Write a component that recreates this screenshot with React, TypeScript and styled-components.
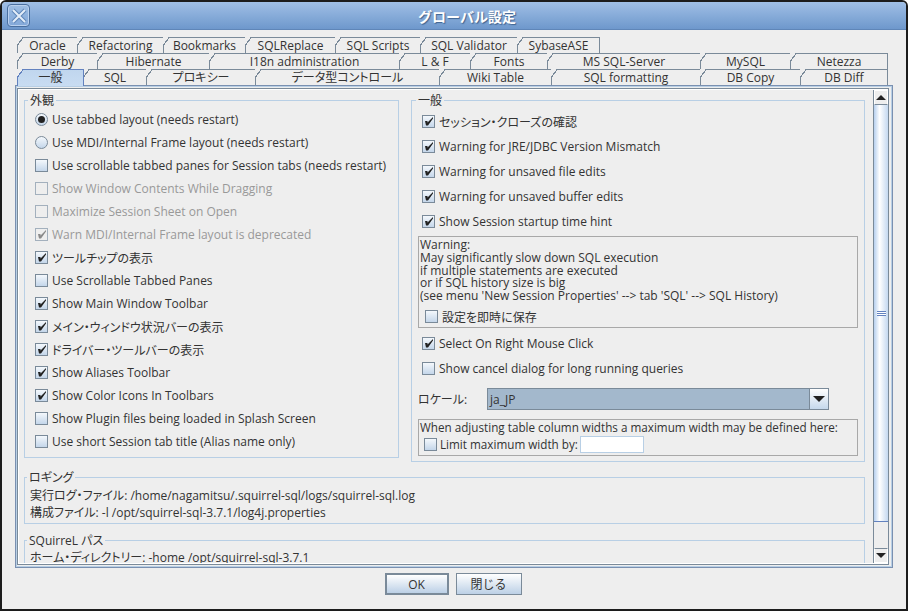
import styled, { createGlobalStyle } from "styled-components";

const GlobalStyle = createGlobalStyle`
  html, body {
    margin: 0;
    padding: 0;
    background: #ffffff;
  }
  * {
    box-sizing: border-box;
  }
`;

const FONT = `"Open Sans", "Noto Sans CJK JP", sans-serif`;

const tabRows = [
  [
    ["Oracle", 60],
    ["Refactoring", 86],
    ["Bookmarks", 82],
    ["SQLReplace", 90],
    ["SQL Scripts", 85],
    ["SQL Validator", 97],
    ["SybaseASE", 82],
  ],
  [
    ["Derby", 80],
    ["Hibernate", 112],
    ["I18n administration", 190],
    ["L & F", 71],
    ["Fonts", 77],
    ["MS SQL-Server", 153],
    ["MySQL", 90],
    ["Netezza", 97],
  ],
  [
    ["一般", 66],
    ["SQL", 63],
    ["プロキシー", 109],
    ["データ型コントロール", 184],
    ["Wiki Table", 112],
    ["SQL formatting", 149],
    ["DB Copy", 100],
    ["DB Diff", 87],
  ],
] as [string, number][][];

const leftChecks: [string, "on" | "off" | "radio" | "radioOn", boolean?][] = [
  ["Use tabbed layout (needs restart)", "radioOn"],
  ["Use MDI/Internal Frame layout (needs restart)", "radio"],
  ["Use scrollable tabbed panes for Session tabs (needs restart)", "off"],
  ["Show Window Contents While Dragging", "off", true],
  ["Maximize Session Sheet on Open", "off", true],
  ["Warn MDI/Internal Frame layout is deprecated", "on", true],
  ["ツールチップの表示", "on"],
  ["Use Scrollable Tabbed Panes", "off"],
  ["Show Main Window Toolbar", "on"],
  ["メイン・ウィンドウ状況バーの表示", "on"],
  ["ドライバー・ツールバーの表示", "on"],
  ["Show Aliases Toolbar", "on"],
  ["Show Color Icons In Toolbars", "on"],
  ["Show Plugin files being loaded in Splash Screen", "off"],
  ["Use short Session tab title (Alias name only)", "off"],
];

const App = () => {
  return (
    <Window>
      <GlobalStyle />
      <TitleBar>
        <CloseButton>
          <svg width="18" height="18" viewBox="0 0 18 18">
            <path d="M3 3 L15 15 M15 3 L3 15" stroke="#5f86b8" strokeWidth="4" fill="none" />
            <path d="M3 3 L15 15 M15 3 L3 15" stroke="#e4edf8" strokeWidth="2" fill="none" />
          </svg>
        </CloseButton>
        <TitleText>グローバル設定</TitleText>
      </TitleBar>
      <Body>
        <TabStrip>
          {tabRows.map((row, i) => (
            <TabRow key={i} $tall={i === 2}>
              {row.map(([label, width], j) => (
                <Tab key={label} $w={width} $active={i === 2 && j === 0}>
                  {label}
                </Tab>
              ))}
            </TabRow>
          ))}
        </TabStrip>
        <TabPanel>
          <ScrollPane>
            <ScrollContent>
              <Columns>
                <LeftGroup>
                  <GroupLegend $x={-7}>外観</GroupLegend>
                  {leftChecks.map(([label, kind, disabled]) => (
                    <LeftRow key={label} $disabled={disabled}>
                      <Mark kind={kind} disabled={disabled} />
                      {label}
                    </LeftRow>
                  ))}
                </LeftGroup>
                <RightGroup>
                  <GroupLegend $x={-2}>一般</GroupLegend>
                  <RightRow><Mark kind="on" />セッション・クローズの確認</RightRow>
                  <RightRow><Mark kind="on" />Warning for JRE/JDBC Version Mismatch</RightRow>
                  <RightRow><Mark kind="on" />Warning for unsaved file edits</RightRow>
                  <RightRow><Mark kind="on" />Warning for unsaved buffer edits</RightRow>
                  <RightRow><Mark kind="on" />Show Session startup time hint</RightRow>
                  <NoteBox>
                    <NoteLine>Warning:</NoteLine>
                    <NoteLine>May significantly slow down SQL execution</NoteLine>
                    <NoteLine>if multiple statements are executed</NoteLine>
                    <NoteLine>or if SQL history size is big</NoteLine>
                    <NoteLine>(see menu 'New Session Properties' --&gt; tab 'SQL' --&gt; SQL History)</NoteLine>
                    <NoteCheck><Mark kind="off" />設定を即時に保存</NoteCheck>
                  </NoteBox>
                  <LowerRow><Mark kind="on" />Select On Right Mouse Click</LowerRow>
                  <LowerRow><Mark kind="off" />Show cancel dialog for long running queries</LowerRow>
                  <LocaleRow>
                    <LocaleLabel>ロケール:</LocaleLabel>
                    <Combo>
                      <ComboValue>ja_JP</ComboValue>
                      <ComboButton>
                        <svg width="12" height="6" viewBox="0 0 12 6">
                          <path d="M0 0 H12 L6 6 Z" fill="#222222" />
                        </svg>
                      </ComboButton>
                    </Combo>
                  </LocaleRow>
                  <WidthBox>
                    <NoteLine>When adjusting table column widths a maximum width may be defined here:</NoteLine>
                    <WidthRow>
                      <Mark kind="off" />
                      Limit maximum width by:
                      <WidthInput />
                    </WidthRow>
                  </WidthBox>
                </RightGroup>
              </Columns>
              <LogGroup>
                <GroupLegend $x={-3}>ロギング</GroupLegend>
                <InfoLine>実行ログ・ファイル: /home/nagamitsu/.squirrel-sql/logs/squirrel-sql.log</InfoLine>
                <InfoLine>構成ファイル: -l /opt/squirrel-sql-3.7.1/log4j.properties</InfoLine>
              </LogGroup>
              <PathGroup>
                <GroupLegend $x={-3}>SQuirreL パス</GroupLegend>
                <InfoLine>ホーム・ディレクトリー: -home /opt/squirrel-sql-3.7.1</InfoLine>
              </PathGroup>
            </ScrollContent>
            <ScrollBar>
              <ArrowButton>
                <svg width="10" height="5" viewBox="0 0 10 5">
                  <path d="M5 0 L10 5 H0 Z" fill="#222222" />
                </svg>
              </ArrowButton>
              <Track>
                <Thumb>
                  <Grip />
                </Thumb>
              </Track>
              <ArrowButton>
                <svg width="10" height="5" viewBox="0 0 10 5">
                  <path d="M0 0 H10 L5 5 Z" fill="#222222" />
                </svg>
              </ArrowButton>
            </ScrollBar>
          </ScrollPane>
        </TabPanel>
        <Footer>
          <OkButton>OK</OkButton>
          <CloseAction>閉じる</CloseAction>
        </Footer>
      </Body>
    </Window>
  );
};

const Mark = ({ kind, disabled }: { kind: string; disabled?: boolean }) => {
  if (kind === "radio" || kind === "radioOn") {
    return <Radio>{kind === "radioOn" && <RadioDot />}</Radio>;
  }
  return (
    <CheckBox $disabled={disabled}>
      {kind === "on" && (
        <svg width="9" height="9" viewBox="0 0 9 9">
          <path
            d="M1 4 H3.5 V5.5 L9 0 V1.5 L4 8.5 H2 Z"
            fill={disabled ? "#8a8a8a" : "#222222"}
          />
        </svg>
      )}
    </CheckBox>
  );
};

const Window = styled.div`
  width: 908px;
  height: 611px;
  display: flex;
  flex-direction: column;
  background: #eeeeee;
  border: 2px solid #1c1c1c;
  border-radius: 6px 6px 0 0;
  overflow: hidden;
  font-family: ${FONT};
  font-size: 12px;
  font-feature-settings: "palt";
  color: #333333;
`;

const TitleBar = styled.div`
  height: 28px;
  flex: none;
  position: relative;
  display: flex;
  align-items: center;
  justify-content: center;
  background: linear-gradient(#a0bfe6, #6e98cc);
  border-bottom: 1px solid #5f86b8;
`;

const CloseButton = styled.div`
  position: absolute;
  left: 5px;
  top: 2px;
  width: 23px;
  height: 23px;
  display: flex;
  align-items: center;
  justify-content: center;
  border: 1px solid #4a6f9f;
  border-radius: 4px;
  background: linear-gradient(#9dbde4, #83a8d8);
  box-shadow: inset 0 0 0 1px #b9d0ee;
`;

const TitleText = styled.div`
  margin-left: 26px;
  font-size: 14px;
  font-weight: 700;
  font-feature-settings: normal;
  color: #ffffff;
  text-shadow: 1px 1px 1px #3f638f;
`;

const Body = styled.div`
  flex: 1;
  min-height: 0;
  display: flex;
  flex-direction: column;
  padding: 7px 13px 0 13px;
`;

const TabStrip = styled.div`
  display: flex;
  flex-direction: column;
  padding-left: 2px;
  flex: none;
`;

const TabRow = styled.div<{ $tall?: boolean }>`
  display: flex;
  height: ${(p) => (p.$tall ? "17px" : "16px")};
`;

const Tab = styled.div<{ $w: number; $active?: boolean }>`
  position: relative;
  width: ${(p) => p.$w + 1}px;
  flex: none;
  display: flex;
  align-items: center;
  justify-content: center;
  line-height: 1;
  color: #333333;
  white-space: nowrap;
  background: ${(p) => (p.$active ? "linear-gradient(#c0d6ee, #c8dcf2)" : "#eeeeee")};
  border-top: 1px solid ${(p) => (p.$active ? "#6382bf" : "#7a8a99")};
  border-left: 1px solid ${(p) => (p.$active ? "#6382bf" : "#7a8a99")};
  border-right: 1px solid ${(p) => (p.$active ? "#6382bf" : "#7a8a99")};
  margin-right: -1px;
  z-index: ${(p) => (p.$active ? 2 : 1)};

  &::before {
    content: "";
    position: absolute;
    left: -1px;
    top: -1px;
    width: 6px;
    height: 8px;
    background: linear-gradient(
      to bottom right,
      #eeeeee 0,
      #eeeeee 48%,
      ${(p) => (p.$active ? "#6382bf" : "#7a8a99")} 48%,
      ${(p) => (p.$active ? "#6382bf" : "#7a8a99")} 60%,
      transparent 60%
    );
  }
`;

const TabPanel = styled.div`
  height: 483px;
  flex: none;
  margin-top: -1px;
  border: 1px solid #7a90b0;
  box-shadow: inset 0 0 0 1px #b8cfe5;
  padding: 2px 3px 2px 1px;
  background: #eeeeee;
  z-index: 1;
`;

const ScrollPane = styled.div`
  height: 100%;
  display: flex;
  border: 1px solid #7a8a99;
  box-shadow: inset 0 0 0 1px #ffffff;
  padding: 1px 0 1px 1px;
`;

const ScrollContent = styled.div`
  flex: 1;
  min-width: 0;
  overflow: hidden;
  padding: 4px 8px 0 5px;
`;

const Columns = styled.div`
  display: flex;
  gap: 12px;
  align-items: flex-start;
`;

const Group = styled.fieldset`
  margin: 0;
  min-width: 0;
  border: 1px solid #b8cfe5;
  padding: 0;
`;

const GroupLegend = styled.legend<{ $x: number }>`
  margin-left: ${(p) => p.$x}px;
  padding: 0 2px;
  line-height: 13px;
  color: #333333;
`;

const LeftGroup = styled(Group)`
  width: 375px;
  height: 364px;
  flex: none;
  padding: 1px 0 0 10px;
`;

const LeftRow = styled.div<{ $disabled?: boolean }>`
  height: 23px;
  display: flex;
  align-items: center;
  gap: 4px;
  white-space: nowrap;
  color: ${(p) => (p.$disabled ? "#999999" : "#333333")};
`;

const RightGroup = styled(Group)`
  width: 454px;
  height: 368px;
  flex: none;
  padding: 2px 6px 0 6px;
`;

const RightRow = styled.div`
  height: 25px;
  display: flex;
  align-items: center;
  gap: 4px;
  padding-left: 4px;
  white-space: nowrap;
`;

const NoteBox = styled.div`
  height: 92px;
  margin-top: 2px;
  border: 1px solid #a8a8a8;
  padding: 2px 1px 1px;
`;

const NoteLine = styled.div`
  height: 12.8px;
  line-height: 12.8px;
  white-space: nowrap;
`;

const NoteCheck = styled.div`
  display: flex;
  align-items: center;
  gap: 4px;
  margin-top: 6px;
  padding-left: 5px;
  height: 16px;
`;

const LowerRow = styled(RightRow)`
  &:nth-of-type(7) {
    margin-top: 3px;
  }
`;

const LocaleRow = styled.div`
  display: flex;
  align-items: center;
  height: 22px;
  margin-top: 7px;
`;

const LocaleLabel = styled.div`
  width: 69px;
  flex: none;
`;

const Combo = styled.div`
  width: 342px;
  height: 22px;
  display: flex;
  border: 1px solid #7a8a99;
`;

const ComboValue = styled.div`
  flex: 1;
  display: flex;
  align-items: center;
  padding-left: 2px;
  background: #a3b8cc;
  color: #333333;
`;

const ComboButton = styled.div`
  width: 19px;
  display: flex;
  align-items: center;
  justify-content: center;
  border-left: 1px solid #7a8a99;
  background: linear-gradient(#ffffff, #c5d8ec);
`;

const WidthBox = styled.div`
  height: 37px;
  margin-top: 9px;
  border: 1px solid #a8a8a8;
  padding: 1px;
  font-size: 11.7px;
`;

const WidthRow = styled.div`
  display: flex;
  align-items: center;
  gap: 3px;
  margin-top: 2px;
  padding-left: 4px;
  height: 17px;
  white-space: nowrap;
`;

const WidthInput = styled.div`
  width: 64px;
  height: 17px;
  margin-left: -1px;
  background: #ffffff;
  border: 1px solid #b8cfe5;
`;

const LogGroup = styled(Group)`
  height: 53px;
  margin-top: 9px;
  padding: 3px 0 0 5px;
`;

const PathGroup = styled(Group)`
  height: 52px;
  margin-top: 10px;
  padding: 2px 0 0 5px;
`;

const InfoLine = styled.div`
  height: 17px;
  line-height: 17px;
  white-space: nowrap;
`;

const CheckBox = styled.span<{ $disabled?: boolean }>`
  width: 13px;
  height: 13px;
  flex: none;
  display: inline-flex;
  align-items: center;
  justify-content: center;
  border: 1px solid ${(p) => (p.$disabled ? "#a3b0bd" : "#7a8a99")};
  background: ${(p) => (p.$disabled ? "#eeeeee" : "linear-gradient(#f4f8fc, #c4d6ea)")};
`;

const Radio = styled.span`
  width: 13px;
  height: 13px;
  flex: none;
  display: inline-flex;
  align-items: center;
  justify-content: center;
  border: 1px solid #7a8a99;
  border-radius: 50%;
  background: linear-gradient(#f4f8fc, #c4d6ea);
`;

const RadioDot = styled.span`
  width: 7px;
  height: 7px;
  border-radius: 50%;
  background: #222222;
`;

const ScrollBar = styled.div`
  width: 15px;
  flex: none;
  display: flex;
  flex-direction: column;
  border-left: 1px solid #7a8a99;
`;

const ArrowButton = styled.div`
  height: 15px;
  flex: none;
  display: flex;
  align-items: center;
  justify-content: center;
  background: #eeeeee;
  border: 1px solid #ffffff;
  border-bottom: 1px solid #7a8a99;
  &:last-child {
    border-top: 1px solid #7a8a99;
    border-bottom: 1px solid #ffffff;
  }
`;

const Track = styled.div`
  flex: 1;
  min-height: 0;
  background: #eeeeee;
`;

const Thumb = styled.div`
  height: 417px;
  display: flex;
  align-items: center;
  justify-content: center;
  border-bottom: 1px solid #6382bf;
  background: linear-gradient(to right, #b8d0ee, #ffffff 40%, #c4d8f0);
`;

const Grip = styled.div`
  width: 9px;
  height: 5px;
  border-top: 1px solid #6382bf;
  border-bottom: 1px solid #6382bf;
  background: linear-gradient(#ffffff 33%, #6382bf 33%, #6382bf 66%, #ffffff 66%);
`;

const Footer = styled.div`
  height: 27px;
  flex: none;
  display: flex;
  justify-content: center;
  align-items: flex-end;
  gap: 7px;
  padding-right: 2px;
`;

const ActionButton = styled.button`
  height: 22px;
  padding: 0;
  font-family: ${FONT};
  font-size: 12px;
  color: #333333;
  background: linear-gradient(#ffffff, #bcd0e6);
`;

const OkButton = styled(ActionButton)`
  width: 64px;
  border: 2px solid #7a8a99;
`;

const CloseAction = styled(ActionButton)`
  width: 66px;
  border: 1px solid #7a8a99;
`;

export default App;
